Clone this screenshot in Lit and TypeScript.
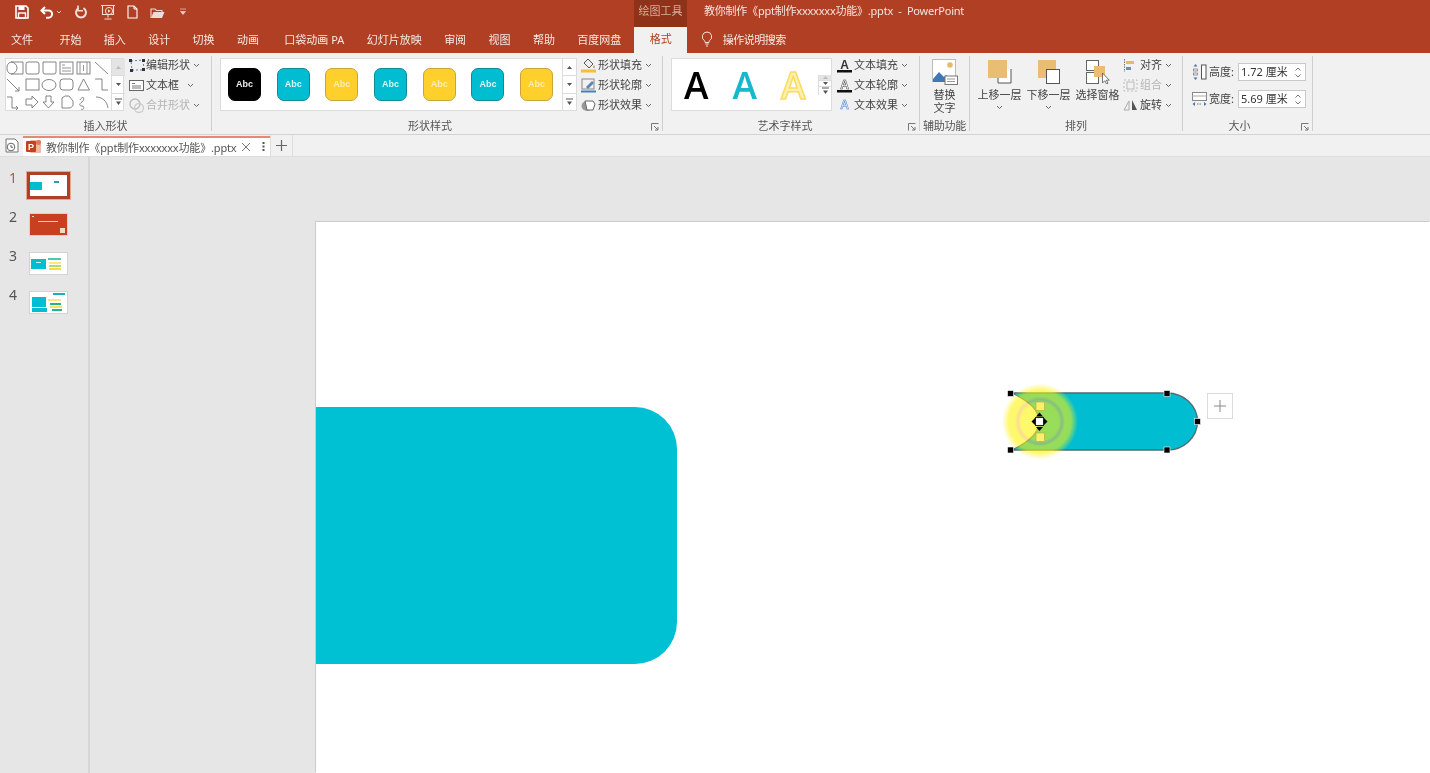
import { LitElement, html, css, svg } from "lit";
import { customElement } from "lit/decorators.js";

const chev = html`<svg class="chev" width="7" height="5" viewBox="0 0 7 5"><path d="M1 1l2.500 2.500L6 1" fill="none" stroke="#666" stroke-width="1"/></svg>`;
const ic = (w: number, h: number, body: unknown) => html`<svg width=${w} height=${h} viewBox="0 0 ${w} ${h}">${body}</svg>`;

const qat = [
  ic(14, 14, svg`<path d="M1 1h10l2 2v10H1z" fill="none" stroke="#fff" stroke-width="1.600"/><rect x="3.500" y="1" width="6" height="4" fill="#fff"/><rect x="3.500" y="8" width="7" height="5" fill="none" stroke="#fff" stroke-width="1.400"/>`),
  ic(14, 14, svg`<path d="M5 2L1.500 5.500 5 9" fill="none" stroke="#fff" stroke-width="2"/><path d="M2 5.500h6.500a3.600 3.600 0 0 1 0 7.200H6" fill="none" stroke="#fff" stroke-width="2"/>`),
  ic(6, 14, svg`<path d="M1 6l2 2 2-2" fill="none" stroke="#e8c8bc" stroke-width="1"/>`),
  ic(14, 14, svg`<path d="M9.500 3.200a5 5 0 1 1-5 0" fill="none" stroke="#f4ddd5" stroke-width="2"/><path d="M4 0.500v5.200h5" fill="none" stroke="#f4ddd5" stroke-width="1.600"/>`),
  ic(16, 16, svg`<path d="M1 1.500h14M2.500 1.500v9h11v-9M8 10.500v3M4.500 15h7" fill="none" stroke="#f4ddd5" stroke-width="1.100"/><circle cx="9" cy="7" r="3.600" fill="none" stroke="#f4ddd5"/><path d="M8 5.300l2.600 1.700L8 8.700z" fill="#f4ddd5"/>`),
  ic(11, 14, svg`<path d="M1 1h6l3 3v9H1z" fill="none" stroke="#fff" stroke-width="1.100"/><path d="M7 1v3h3" fill="none" stroke="#fff"/>`),
  ic(15, 13, svg`<path d="M1 12V3h4l1.500 1.500H12V6" fill="none" stroke="#f0dcd4" stroke-width="1.100"/><path d="M1 12l2.500-6H14.500L12 12z" fill="#f0dcd4"/>`),
  ic(8, 8, svg`<path d="M1 1h6M1.500 3.500h5L4 6.500z" fill="#e8d0c6" stroke="#e8d0c6" stroke-width=".7"/>`),
];

const tabs: [string, string][] = [
  ["文件", "f"], ["开始", ""], ["插入", ""], ["设计", ""], ["切换", ""], ["动画", "w"],
  ["口袋动画 PA", ""], ["幻灯片放映", ""], ["审阅", ""], ["视图", ""], ["帮助", ""], ["百度网盘", ""],
];

const shapesSvg = svg`<svg class="shapes" width="105" height="51" viewBox="6 59 105 51" fill="none" stroke="#777" stroke-width=".9">
<path d="M11 62h12v12H11a6 6 0 0 0 0-12z"/><path d="M11 62a6 6 0 0 0-4 6 6 6 0 0 0 4 6"/>
<rect x="26" y="62" width="13" height="12" rx="2"/><path d="M43 62h13v10a2 2 0 0 1-2 2H45a2 2 0 0 1-2-2z"/>
<rect x="60" y="62" width="13" height="12"/><path d="M62 65h3M62 68h9M62 71h9" stroke="#888"/>
<rect x="77" y="62" width="13" height="12"/><path d="M80 62v12M87 62v12M83.500 65v6" stroke="#888"/>
<path d="M95 62l13 12"/>
<path d="M7 79l12 12M19 91v-4M19 91h-4"/><rect x="26" y="79" width="13" height="11"/><ellipse cx="49" cy="85" rx="7" ry="5.500"/>
<rect x="60" y="79" width="13" height="11" rx="3"/><path d="M83.500 79l6 11H78z"/><path d="M95 79h7v11h6"/>
<path d="M7 97h5v11h6M16 106l2 2-2 2"/><path d="M26 99h6v-3l6 6-6 6v-3h-6z"/><path d="M46 96h5v6h3l-5.500 6-5.500-6h3z"/>
<path d="M62 108v-10l3-2h4l4 5v2a4 4 0 0 1-4 5z"/><path d="M80 100c4-6 5 0 2 2s-3 4 0 4 2 5-1 3" />
<path d="M96 97c6 0 11 4 12 11"/></svg>`;

const scrollCol = (firstDim: boolean) => html`<div class="scroll">
  <div class=${firstDim ? "dim" : ""}><svg width="7" height="5" viewBox="0 0 7 5"><path d="M3.500 1l2.500 3H1z" fill=${firstDim ? "#bbb" : "#555"}/></svg></div>
  <div><svg width="7" height="5" viewBox="0 0 7 5"><path d="M3.500 4L1 1h5z" fill="#555"/></svg></div>
  <div><svg width="7" height="8" viewBox="0 0 7 8"><path d="M0 1h7" stroke="#555"/><path d="M3.500 7L1 3.500h5z" fill="#555"/></svg></div>
</div>`;

const launcher = html`<svg class="launch" width="8" height="8" viewBox="0 0 8 8" fill="none" stroke="#777"><path d="M.5 7.500v-7h7M3 3l4 4M7 4v3H4"/></svg>`;

const styles = ["k", "t", "y", "t", "y", "t", "y"];

const iEdit = ic(16, 14, svg`<path d="M2 3l12-1 1 10L3 12z" fill="none" stroke="#5a7fb0" stroke-dasharray="2 2"/><rect x="0" y="1" width="3" height="3" fill="#333"/><rect x="13" y="1" width="3" height="3" fill="#333"/><rect x="1" y="11" width="3" height="3" fill="#333"/><rect x="13" y="10" width="3" height="3" fill="#333"/>`);
const iBox = ic(16, 13, svg`<rect x=".5" y="1.500" width="14" height="10" fill="#fff" stroke="#666"/><path d="M3 4.500h3M3 7h9M3 9h9" stroke="#777"/>`);
const iMerge = ic(16, 15, svg`<circle cx="6" cy="6" r="5" fill="none" stroke="#bbb" stroke-width="1.300"/><circle cx="10" cy="10" r="4.500" fill="none" stroke="#ccc" stroke-width="1.300"/>`);
const iFill = ic(15, 15, svg`<path d="M7 1l5 5-4 4-5-5z" fill="#eee" stroke="#555"/><path d="M13 7c1 2 1 3 0 3s-1-1 0-3" fill="#888"/><rect x="0" y="11.500" width="15" height="3" fill="#F5C033"/>`);
const iLine = ic(15, 15, svg`<rect x="1" y="1" width="12" height="10" fill="none" stroke="#888"/><path d="M5 9l6-6 2 2-6 6z" fill="#5a86b8"/><rect x="0" y="12.500" width="15" height="2" fill="#4a80b8"/>`);
const iEff = ic(15, 14, svg`<ellipse cx="6" cy="8" rx="5.500" ry="5" fill="#999"/><path d="M4 3h8l2 3-2 6H6z" fill="#fff" stroke="#666"/>`);
const iTA = (fill: string, stroke: string, bar: boolean) => ic(15, 15, svg`<text x="7.500" y="11" font-size="12" text-anchor="middle" font-family="Liberation Sans" font-weight="700" fill=${fill} stroke=${stroke} stroke-width=".5">A</text>${bar ? svg`<rect x="0" y="12" width="15" height="2.500" fill="#111"/>` : ""}`);
const iAlign = ic(13, 13, svg`<path d="M1.500 0v13" stroke="#777" stroke-dasharray="1.500 1"/><rect x="3" y="2" width="8" height="3" fill="#E9B96A"/><rect x="3" y="8" width="5" height="3" fill="#6a8fb8"/>`);
const iGroup = ic(15, 13, svg`<g fill="none" stroke="#bbb"><rect x="1" y="1" width="13" height="11" stroke-dasharray="2 2"/><rect x="4" y="3" width="7" height="7"/></g>`);
const iRot = ic(15, 12, svg`<path d="M9 1l5 10H9z" fill="#555"/><path d="M6 2L1 11h5z" fill="none" stroke="#aaa"/>`);
const iH = ic(15, 18, svg`<path d="M3.500 1l2 2.500h-4zM3.500 17l2-2.500h-4z" fill="#4a78a8"/><rect x="1.500" y="6" width="4" height="2" fill="none" stroke="#777" stroke-width=".7"/><rect x="1.500" y="10" width="4" height="2" fill="none" stroke="#777" stroke-width=".7"/><rect x="9.500" y="2" width="4.500" height="14" fill="#fff" stroke="#555"/>`);
const iW = ic(15, 16, svg`<rect x=".5" y="1.500" width="14" height="8" fill="#fff" stroke="#888"/><path d="M.5 5h14" stroke="#aaa"/><path d="M.5 13l2.500-2v4zM14.500 13L12 11v4z" fill="#4a78a8"/><path d="M5 13h5" stroke="#777" stroke-dasharray="1.500 1"/>`);

const cmd = (icon: unknown, label: string, cls = "", arrow = true) => html`<div class="cmd ${cls}"><span class="ci">${icon}</span><span class="cl">${label}</span>${arrow ? chev : ""}</div>`;

@customElement("app-root")
export class AppRoot extends LitElement {
  static styles = css`
    :host { display: block; width: 1430px; height: 773px; overflow: hidden; position: relative;
      font-family: "Noto Sans", "Noto Sans CJK SC", sans-serif; font-size: 11px; color: #444; background: #e6e6e6; }
    .wrap { filter: blur(0.45px); }
    svg { display: block; flex: none; }
    .title { height: 27px; background: #b03f24; display: flex; color: #f6e4dd; }
    .qat { width: 634px; display: flex; align-items: center; box-sizing: border-box; padding: 0 0 3px 15px; }
    .qat svg { margin-right: 11px; }
    .qat svg:nth-child(2) { margin-right: 2px; }
    .qat svg:nth-child(3) { margin-right: 12px; }
    .qat svg:nth-child(4) { margin-right: 12px; }
    .qat svg:nth-child(5) { margin-right: 11px; }
    .qat svg:nth-child(6) { margin-right: 12px; }
    .qat svg:nth-child(7) { margin-right: 14px; }
    .ctx { width: 53px; background: #8e3219; text-align: center; line-height: 22px; color: #d6ae9d; }
    .doc { padding-left: 17px; line-height: 22px; white-space: pre; letter-spacing: -.02em; }
    .tabs { height: 26px; box-sizing: border-box; padding-bottom: 2px; background: #b03f24; display: flex; align-items: center; padding-left: 11px; color: #f8e9e3; gap: 22.400px; }
    .tabs .f { margin-right: 4px; }
    .tabs .w { margin-right: 3px; }
    .tab-on { align-self: stretch; width: 53px; background: #f1f1f1; color: #b03f24; text-align: center; line-height: 24px; margin: 0 0 -2px -9.400px; }
    .search { display: flex; align-items: center; gap: 10px; margin-left: -9px; letter-spacing: -.5px; }
    .ribbon { height: 81px; background: #f1f1f1; border-bottom: 1px solid #d2d2d2; display: flex; line-height: 14px; }
    .sep { width: 1px; margin: 3px 0 3px; background: #cfcfcf; flex: none; }
    .grp { display: flex; flex-direction: column; flex: none; position: relative; box-sizing: border-box; }
    .body { flex: 1; display: flex; padding-top: 5px; min-height: 0; }
    .lbl { height: 18px; text-align: center; line-height: 18px; flex: none; color: #555; position: relative; margin-bottom: -1px; }
    .launch { position: absolute; right: 3px; top: 6px; }
    .gal { display: flex; height: 53px; background: #fff; border: 1px solid #dcdcdc; box-sizing: border-box; flex: none; }
    .scroll { width: 13px; margin-left: auto; border-left: 1px solid #dcdcdc; display: flex; flex-direction: column; flex: none; }
    .scroll > div { flex: 1; display: flex; align-items: center; justify-content: center; border-bottom: 1px solid #dcdcdc; }
    .scroll > div:last-child { border-bottom: 0; }
    .scroll .dim { background: #e4e4e4; }
    .cmds { display: flex; flex-direction: column; margin-top: -3px; flex: none; }
    .cmd { height: 20px; display: flex; align-items: center; white-space: nowrap; color: #444; }
    .ci { width: 17px; flex: none; display: flex; align-items: center; }
    .cmd .chev { margin-left: 3px; }
    .cmd.wide .chev { margin-left: 8px; }
    .cmd.off { color: #b4b4b4; }
    .g1 { width: 211px; }
    .g1 .gal { width: 119px; margin-left: 5px; }
    .g1 .cmds { margin-left: 5px; }
    .g2 { width: 450px; }
    .g2 .gal { width: 357px; margin-left: 8px; }
    .stys { flex: 1; display: flex; align-items: center; padding-left: 7px; gap: 15.700px; }
    .g2 .cmds { margin-left: 4px; }
    .sty { width: 33px; height: 33px; border-radius: 7px; box-sizing: border-box; border: 1px solid; font: 9px "Liberation Sans", sans-serif; font-weight: 700; display: flex; align-items: center; justify-content: center; flex: none; padding-bottom: 2px; }
    .sty.k { background: #000; border-color: #000; color: #eee; }
    .sty.t { background: #00bdd2; border-color: #118a9a; color: #d8f6fa; }
    .sty.y { background: #ffd02b; border-color: #c8a43a; color: #fbeeb0; }
    .g2 .lbl { padding-right: 14px; }
    .g3 { width: 256px; }
    .g3 .gal { width: 161px; margin-left: 8px; align-items: center; }
    .bigA { width: 48.500px; text-align: center; font: 37px/50px "Open Sans", "Liberation Sans", sans-serif; font-weight: 600; flex: none; }
    .bigA.a { color: #000; }
    .bigA.b { color: #16b9cc; }
    .bigA.c { color: #fdf0b0; -webkit-text-stroke: 1.500px #fbdc5c; }
    .g3 .cmds { margin-left: 5px; }
    .g3 .lbl { padding-right: 12px; }
    .g4 { width: 49px; }
    .g4 .body { flex-direction: column; align-items: center; padding-top: 6px; }
    .two { margin-top: 3px; text-align: center; line-height: 13px; }
    .lbl.nar { letter-spacing: -.2px; white-space: nowrap; }
    .g5 { width: 212px; }
    .g5 .body { padding-left: 8px; }
    .big { width: 43px; display: flex; flex-direction: column; align-items: center; margin-right: 6px; flex: none; white-space: nowrap; }
    .big svg.pic { margin-top: 1px; }
    .big .t { margin-top: 4px; line-height: 14px; }
    .big .chev { margin-top: 3px; }
    .g5 .cmds { margin-left: -2px; }
    .g6 { width: 129px; }
    .g6 .body { flex-direction: column; padding: 10px 0 0 9px; gap: 9px; }
    .g6 .lbl { padding-right: 16px; }
    .sz { display: flex; align-items: center; height: 18px; }
    .sz .ci { width: 17px; }
    .sz .inp { margin-left: 4px; width: 68px; height: 18px; box-sizing: border-box; background: #fff; border: 1px solid #c9c9c9; display: flex; align-items: center; padding-left: 2px; color: #333; position: relative; white-space: nowrap; }
    .spin { margin-left: auto; margin-right: 3px; }
    .doctabs { height: 21px; background: #f1f1f1; border-bottom: 1px solid #dedede; display: flex; align-items: stretch; }
    .hist { width: 23px; display: flex; align-items: center; justify-content: center; }
    .dtab { width: 247px; background: #fff; border-top: 2px solid #e58a70; box-sizing: border-box; display: flex; align-items: center; padding: 0 0 1px 3px; color: #555; white-space: nowrap; margin-top: 1px; }
    .dtab .nm { margin-left: 5px; width: 195px; letter-spacing: -.16px; flex: none; }
    .dtab .dots { margin-left: 11px; }
    .plus { width: 23px; border-right: 1px solid #dedede; border-left: 1px solid #dedede; display: flex; align-items: center; justify-content: center; box-sizing: border-box; }
    .main { height: 616px; display: flex; background: #e6e6e6; }
    .side { width: 88px; border-right: 2px solid #d6d6d6; flex: none; padding-top: 15px; display: flex; flex-direction: column; gap: 16px; }
    .row { display: flex; height: 23px; font-size: 14px; line-height: 14px; color: #555; padding-left: 9px; box-sizing: border-box; }
    .row.on { color: #b5583f; height: 26px; margin-bottom: -3px; }
    .row .n { width: 21px; flex: none; margin-top: -1px; }
    .row .thumb { margin-top: 3px; box-shadow: 0 0 0 1px #d3d3d3; }
    .row.on .thumb { margin: 0 0 0 -3px; box-shadow: 0 0 0 1px #e8a590; }
    .stage { flex: 1; padding: 65px 0 0 226px; min-width: 0; }
    .slide { width: 1114px; height: 551px; background: #fff; box-shadow: -1px -1px 0 #cbcbcb; overflow: hidden; position: relative; }
  `;

  render() {
    return html`<div class="wrap">
      <div class="title">
        <div class="qat">${qat}</div>
        <div class="ctx">绘图工具</div>
        <div class="doc">教你制作《ppt制作xxxxxxx功能》.pptx  -  PowerPoint</div>
      </div>
      <div class="tabs">
        ${tabs.map(([t, c]) => html`<span class=${c}>${t}</span>`)}
        <span class="tab-on">格式</span>
        <span class="search">
          ${ic(12, 16, svg`<path d="M6 1a4.700 4.700 0 0 0-2.600 8.600c.5.400.6 1 .6 1.900h4c0-.9.1-1.500.6-1.900A4.700 4.700 0 0 0 6 1z" fill="none" stroke="#f5e3dc"/><path d="M4.300 13h3.400M5 15h2" stroke="#f5e3dc"/>`)}
          <span>操作说明搜索</span>
        </span>
      </div>
      <div class="ribbon">
        <div class="grp g1">
          <div class="body">
            <div class="gal">${shapesSvg}${scrollCol(true)}</div>
            <div class="cmds">
              ${cmd(iEdit, "编辑形状")}
              ${cmd(iBox, "文本框", "wide")}
              ${cmd(iMerge, "合并形状", "off")}
            </div>
          </div>
          <div class="lbl">插入形状</div>
        </div>
        <div class="sep"></div>
        <div class="grp g2">
          <div class="body">
            <div class="gal">
              <div class="stys">${styles.map((s) => html`<div class="sty ${s}">Abc</div>`)}</div>
              ${scrollCol(false)}
            </div>
            <div class="cmds">
              ${cmd(iFill, "形状填充")}
              ${cmd(iLine, "形状轮廓")}
              ${cmd(iEff, "形状效果")}
            </div>
          </div>
          <div class="lbl">形状样式${launcher}</div>
        </div>
        <div class="sep"></div>
        <div class="grp g3">
          <div class="body">
            <div class="gal">
              <div class="bigA a">A</div><div class="bigA b">A</div><div class="bigA c">A</div>
              ${scrollCol(true)}
            </div>
            <div class="cmds">
              ${cmd(iTA("#333", "none", true), "文本填充")}
              ${cmd(iTA("#fff", "#333", true), "文本轮廓")}
              ${cmd(iTA("#dbe8f6", "#4a86c8", false), "文本效果")}
            </div>
          </div>
          <div class="lbl">艺术字样式${launcher}</div>
        </div>
        <div class="sep"></div>
        <div class="grp g4">
          <div class="body">
            ${ic(26, 26, svg`<rect x=".5" y=".5" width="23" height="22" fill="#fff" stroke="#bbb"/><circle cx="18" cy="6" r="2.800" fill="#E9B96A"/><path d="M1 20l6-7 5 5 2-2 4 4v3H1z" fill="#3f78b4"/><rect x="13" y="17" width="12.500" height="8.500" fill="#fff" stroke="#777"/><path d="M15 20h8M15 22.500h8" stroke="#999"/>`)}
            <div class="two">替换<br />文字</div>
          </div>
          <div class="lbl nar">辅助功能</div>
        </div>
        <div class="sep"></div>
        <div class="grp g5">
          <div class="body">
            <div class="big">
              ${html`<svg class="pic" width="24" height="25" viewBox="0 0 24 25"><path d="M10 10v14h13V10" fill="#fff" stroke="#555"/><rect x="0" y="1" width="19" height="18" fill="#e9bd72"/></svg>`}
              <span class="t">上移一层</span>${chev}
            </div>
            <div class="big">
              ${html`<svg class="pic" width="24" height="25" viewBox="0 0 24 25"><rect x="1" y="1" width="18" height="18" fill="#e9bd72"/><rect x="9.500" y="10.500" width="13" height="14" fill="#fff" stroke="#555"/></svg>`}
              <span class="t">下移一层</span>${chev}
            </div>
            <div class="big">
              ${html`<svg class="pic" width="24" height="25" viewBox="0 0 24 25"><rect x=".5" y="1.500" width="12" height="10" fill="#fff" stroke="#666"/><rect x=".5" y="13.500" width="12" height="11" fill="#fff" stroke="#666"/><rect x="8" y="7" width="11" height="11" fill="#e9bd72"/><path d="M16.500 14v10l2.300-2.300 1.700 3.300 1.500-.8-1.700-3h3z" fill="#fff" stroke="#555" stroke-width=".8"/></svg>`}
              <span class="t">选择窗格</span>
            </div>
            <div class="cmds">
              ${cmd(iAlign, "对齐")}
              ${cmd(iGroup, "组合", "off")}
              ${cmd(iRot, "旋转")}
            </div>
          </div>
          <div class="lbl">排列</div>
        </div>
        <div class="sep"></div>
        <div class="grp g6">
          <div class="body">
            <div class="sz"><span class="ci">${iH}</span><span>高度:</span>
              <div class="inp">1.72 厘米
                <svg class="spin" width="8" height="13" viewBox="0 0 8 13" fill="none" stroke="#777"><path d="M1.500 4.500L4 2l2.500 2.500M1.500 8.500L4 11l2.500-2.500"/></svg>
              </div></div>
            <div class="sz"><span class="ci">${iW}</span><span>宽度:</span>
              <div class="inp">5.69 厘米
                <svg class="spin" width="8" height="13" viewBox="0 0 8 13" fill="none" stroke="#777"><path d="M1.500 4.500L4 2l2.500 2.500M1.500 8.500L4 11l2.500-2.500"/></svg>
              </div></div>
          </div>
          <div class="lbl">大小${launcher}</div>
        </div>
        <div class="sep"></div>
      </div>
      <div class="doctabs">
        <div class="hist">${ic(14, 15, svg`<path d="M1 1h9l3 3v10H1z" fill="#fff" stroke="#777"/><circle cx="6" cy="9" r="3.800" fill="#fff" stroke="#666"/><path d="M6 7v2.300h2" fill="none" stroke="#666"/>`)}</div>
        <div class="dtab">
          ${ic(15, 15, svg`<rect x="4" y="1" width="11" height="13" rx="1" fill="#eeb7a4"/><circle cx="12.500" cy="3.500" r="2.500" fill="#e0775a"/><rect x="0" y="2" width="10" height="11" rx="1" fill="#c5401f"/><text x="5" y="11" font-size="9" text-anchor="middle" fill="#fff" font-family="Liberation Sans" font-weight="700">P</text>`)}
          <span class="nm">教你制作《ppt制作xxxxxxx功能》.pptx</span>
          ${ic(10, 10, svg`<path d="M1 1l8 8M9 1l-8 8" stroke="#777" fill="none"/>`)}
          <span class="dots">${ic(3, 11, svg`<path d="M0.500 1h2v2h-2zM0.500 4.500h2v2h-2zM0.500 8h2v2h-2z" fill="#555"/>`)}</span>
        </div>
        <div class="plus">${ic(11, 11, svg`<path d="M5.500 0v11M0 5.500h11" stroke="#666" stroke-width="1.200"/>`)}</div>
      </div>
      <div class="main">
        <div class="side">
          <div class="row on"><span class="n">1</span>
            <svg class="thumb" width="43" height="27" viewBox="0 0 43 27"><rect width="43" height="27" fill="#ad4026"/><rect x="3" y="3" width="37" height="21" fill="#fff"/><rect x="3" y="10" width="12" height="8" fill="#00bdd2"/><rect x="27" y="9" width="5" height="2" fill="#2a9db0"/></svg></div>
          <div class="row"><span class="n">2</span>
            <svg class="thumb" width="37" height="21" viewBox="0 0 37 21"><rect width="37" height="21" fill="#c94020"/><rect x="8" y="7" width="20" height="1" fill="#f6c8b8"/><rect x="2" y="2" width="2" height="1" fill="#f6d0c0"/><rect x="30" y="14" width="5" height="5" fill="#f0d8c8"/></svg></div>
          <div class="row"><span class="n">3</span>
            <svg class="thumb" width="37" height="21" viewBox="0 0 37 21"><rect width="37" height="21" fill="#fff"/><rect x="1" y="6" width="15" height="10" fill="#00bdd2"/><rect x="6" y="9" width="5" height="1" fill="#d0f4f8"/><rect x="18" y="5" width="13" height="2" fill="#4fc7b0"/><rect x="19" y="9" width="12" height="2" fill="#ffe680"/><rect x="19" y="12" width="12" height="2" fill="#a8e070"/><rect x="19" y="15" width="12" height="2" fill="#ffd84a"/></svg></div>
          <div class="row"><span class="n">4</span>
            <svg class="thumb" width="37" height="21" viewBox="0 0 37 21"><rect width="37" height="21" fill="#fff"/><rect x="2" y="5" width="14" height="10" fill="#00bdd2"/><rect x="2" y="16" width="15" height="4" fill="#00bdd2"/><rect x="23" y="1" width="12" height="2" fill="#15b0c0"/><rect x="18" y="7" width="13" height="2" fill="#ffe680"/><rect x="20" y="11" width="11" height="2" fill="#22b58c"/><rect x="20" y="14" width="12" height="2" fill="#ffe060"/><rect x="22" y="17" width="10" height="2" fill="#22b58c"/></svg></div>
        </div>
        <div class="stage">
          <div class="slide">
            <svg width="1114" height="551" viewBox="316 222 1114 551">
              <defs>
                <radialGradient id="glow" gradientUnits="userSpaceOnUse" cx="1040" cy="421.500" r="38">
                  <stop offset="0" stop-color="#fdf308" stop-opacity=".6"/>
                  <stop offset=".5" stop-color="#fdf308" stop-opacity=".6"/>
                  <stop offset=".58" stop-color="#f4c040" stop-opacity=".55"/>
                  <stop offset=".66" stop-color="#fdf308" stop-opacity=".6"/>
                  <stop offset=".82" stop-color="#fdf308" stop-opacity=".58"/>
                  <stop offset="1" stop-color="#fdf308" stop-opacity="0"/>
                </radialGradient>
              </defs>
              <path d="M316 407H635a42 42 0 0 1 42 42V622a42 42 0 0 1-42 42H316z" fill="#00c0d4"/>
              <path d="M1012 393H1167A30.500 28.500 0 0 1 1167 450H1012Q1041 436 1038 421.500 1041 407 1012 393z" fill="#00bdd2" stroke="#4d6b74" stroke-width="1.300"/>
              <circle cx="1040" cy="421.500" r="38" fill="url(#glow)"/>
              <g fill="#000" stroke="#fff" stroke-width=".6">
                <rect x="1007.500" y="390.500" width="6" height="6"/><rect x="1164" y="390.500" width="6" height="6"/>
                <rect x="1194.500" y="418.500" width="6" height="6"/><rect x="1007.500" y="447" width="6" height="6"/>
                <rect x="1164" y="447" width="6" height="6"/>
              </g>
              <g fill="#fff06a" stroke="#b9ad50" stroke-width=".7">
                <rect x="1036" y="402" width="8.500" height="8.500"/><rect x="1036" y="433" width="8.500" height="8.500"/>
              </g>
              <path d="M1039.500 412.500l3.500 4h-7zM1039.500 431l3.500-4h-7zM1031.500 421.500l3.500-3.500v7zM1047.500 421.500l-3.500-3.500v7z" fill="#000"/>
              <rect x="1035.500" y="417.500" width="8" height="8" fill="#fff" stroke="#222" stroke-width="1.100"/>
              <rect x="1207.500" y="393.500" width="25" height="25" fill="#fff" stroke="#dcdcdc"/>
              <path d="M1220 400v12M1214 406h12" stroke="#8a8a8a"/>
            </svg>
          </div>
        </div>
      </div>
    </div>`;
  }
}
